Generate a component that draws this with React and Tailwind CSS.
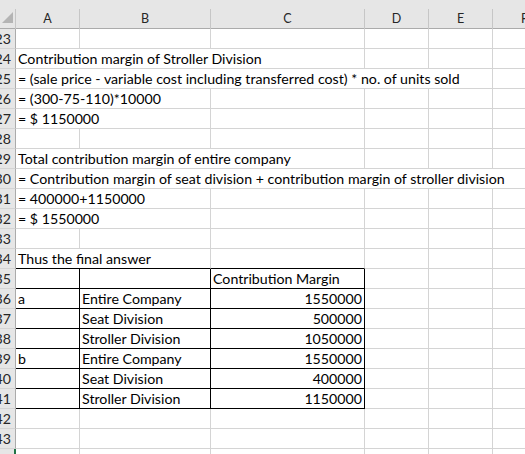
const FONT = "font-['Lato','Liberation_Sans',sans-serif]";
const GRID = "grid grid-cols-[16px_64px_131px_154px_64px_64px_64px]";
const SPAN = { 1: "", 2: "col-span-2", 3: "col-span-3", 5: "col-span-5", 6: "col-span-6" };
const LETTERS = ["A", "B", "C", "D", "E", "F"];

// one cell of the sheet; b = black bottom, r = black right
const Cell = ({ span = 1, text = "", right = false, b = false, r = false }) => (
  <div
    className={`${SPAN[span]} h-[20px] border-r border-b ${r ? "border-r-black" : "border-r-[#d4d4d4]"} ${
      b ? "border-b-black" : "border-b-[#d4d4d4]"
    } flex items-end pb-[1px] whitespace-nowrap leading-[17px] ${right ? "justify-end pr-[2px]" : "pl-[2px]"}`}
  >
    {text}
  </div>
);

const textRow = (n, text, span) => ({
  n,
  cells: [{ span, text }, ...Array(6 - span).fill({})],
});

const empty = (n) => ({ n, cells: Array(6).fill({}) });

const tableRow = (n, a, b, c) => ({
  n,
  cells: [
    { text: a, r: true, b: true },
    { text: b, r: true, b: true },
    { text: c, r: true, b: true, right: true },
    {},
    {},
    {},
  ],
});

const rows = [
  empty(23),
  textRow(24, "Contribution margin of Stroller Division", 3),
  textRow(25, " = (sale price - variable cost including transferred cost) * no. of units sold", 5),
  textRow(26, "= (300-75-110)*10000", 2),
  textRow(27, "= $ 1150000", 2),
  empty(28),
  textRow(29, "Total contribution margin of entire company", 3),
  textRow(30, " = Contribution margin of seat division + contribution margin of stroller division", 6),
  textRow(31, "= 400000+1150000", 2),
  textRow(32, "= $ 1550000", 2),
  empty(33),
  { n: 34, cells: [{ span: 2, text: "Thus the final answer", b: true }, { b: true }, {}, {}, {}] },
  {
    n: 35,
    cells: [{ r: true, b: true }, { r: true, b: true }, { text: "Contribution Margin", r: true, b: true }, {}, {}, {}],
  },
  tableRow(36, "a", "Entire Company", "1550000"),
  tableRow(37, "", "Seat Division", "500000"),
  tableRow(38, "", "Stroller Division", "1050000"),
  tableRow(39, "b", "Entire Company", "1550000"),
  tableRow(40, "", "Seat Division", "400000"),
  tableRow(41, "", "Stroller Division", "1150000"),
  empty(42),
  empty(43),
  empty(44),
];

export default function App() {
  return (
    <div className={`w-full h-screen overflow-hidden bg-white text-black text-[14.2px] ${FONT}`}>
      <div className="w-[557px]">
        {/* column headers */}
        <div className="h-[9px] bg-[#e6e6e6]" />
        <div className={`${GRID} h-[20px] bg-[#e6e6e6] border-b border-[#ababab]`}>
          <div className="relative border-r border-[#c6c6c6]">
            <svg className="absolute left-[2px] top-[3px]" width="12" height="12" viewBox="0 0 12 12">
              <polygon points="11,0 11,11 0,11" fill="#b4b4b4" />
            </svg>
          </div>
          {LETTERS.map((l) => (
            <div
              key={l}
              className="border-r border-[#c6c6c6] flex items-center justify-center text-[12.5px] text-[#262626] pt-[1px]"
            >
              {l}
            </div>
          ))}
        </div>

        {/* sheet rows */}
        {rows.map((row) => (
          <div key={row.n} className={GRID}>
            <div
              className={`h-[20px] bg-[#e6e6e6] border-b border-b-[#d4d4d4] flex items-end justify-end pb-[1px] leading-[17px] pr-[4px] text-[#262626] overflow-hidden ${
                row.n === 44 ? "border-r-2 border-r-[#217346]" : "border-r border-r-[#ababab]"
              }`}
            >
              {row.n}
            </div>
            {row.cells.map((c, i) => (
              <Cell key={i} {...c} />
            ))}
          </div>
        ))}
      </div>
    </div>
  );
}
